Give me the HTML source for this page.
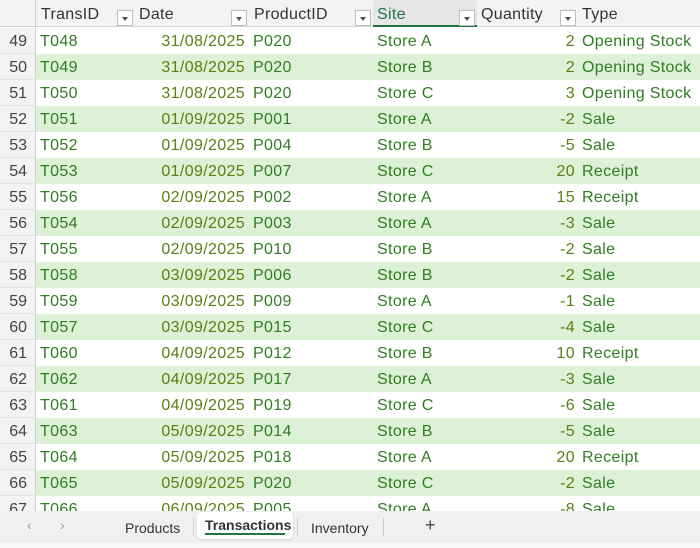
<!DOCTYPE html><html><head><style>
*{margin:0;padding:0;box-sizing:border-box}
body{width:700px;height:548px;overflow:hidden;background:#fff;font-family:"Liberation Sans",sans-serif;position:relative}
.hdr{position:absolute;top:0;left:0;width:700px;height:27px;background:#f3f3f3;border-bottom:1px solid #d6d6d6}
.h{position:absolute;top:6px;font-size:16px;color:#333;letter-spacing:0.3px}
.fb{position:absolute;top:10px;width:16px;height:16px;border:1px solid #bdbdbd;background:#fff}
.fb:after{content:"";position:absolute;left:4px;top:6px;border-left:3px solid transparent;border-right:3px solid transparent;border-top:4px solid #555}
.row{position:absolute;left:0;width:700px;height:26px;font-size:16px;color:#2f7d22;letter-spacing:0.35px}
.row.g .bg{background:#dcf1d5}
.bg{position:absolute;left:36px;right:0;top:0;bottom:0}
.rn{position:absolute;left:0;width:36px;top:0;height:26px;background:#f3f3f3;border-right:1px solid #d0d0d0;border-bottom:1px solid #e2e2e2;color:#444;text-align:right;padding-right:8px;line-height:28px;letter-spacing:0}
.c{position:absolute;top:1px;line-height:26px;white-space:nowrap}
.d{color:#5a7f12}
.tabs{position:absolute;top:511px;left:0;width:700px;height:32px;background:#f0f0f0;font-size:14px;color:#333}
.strip{position:absolute;top:543px;left:0;width:700px;height:5px;background:#f8f8f8}
</style></head><body>
<div class="hdr">
<div style="position:absolute;left:0;top:0;width:36px;height:27px;border-right:1px solid #d0d0d0"></div>
<div class="h" style="left:41px">TransID</div><div class="fb" style="left:117px"></div>
<div class="h" style="left:139px">Date</div><div class="fb" style="left:231px"></div>
<div class="h" style="left:254px">ProductID</div><div class="fb" style="left:355px"></div>
<div style="position:absolute;left:373px;top:0;width:104px;height:27px;background:#e6e6e6;border-bottom:2px solid #217346"></div>
<div class="h" style="left:377px;color:#217346">Site</div><div class="fb" style="left:459px"></div>
<div class="h" style="left:481px">Quantity</div><div class="fb" style="left:560px"></div>
<div class="h" style="left:582px">Type</div>
</div>
<div id="rows"></div>
<div class="tabs">
<div style="position:absolute;left:27px;top:6px;color:#999">&#8249;</div>
<div style="position:absolute;left:60px;top:6px;color:#999">&#8250;</div>
<div style="position:absolute;left:125px;top:9px">Products</div>
<div style="position:absolute;left:193px;top:7px;width:1px;height:18px;background:#ccc"></div>
<div style="position:absolute;left:197px;top:1px;width:96px;height:27px;background:#fff;border-radius:4px;box-shadow:0 1px 2px rgba(0,0,0,.15)"></div>
<div style="position:absolute;left:205px;top:6px;font-weight:bold">Transactions</div>
<div style="position:absolute;left:205px;top:22px;width:80px;height:2px;background:#217346"></div>
<div style="position:absolute;left:297px;top:7px;width:1px;height:18px;background:#ccc"></div>
<div style="position:absolute;left:311px;top:9px">Inventory</div>
<div style="position:absolute;left:383px;top:7px;width:1px;height:18px;background:#ccc"></div>
<div style="position:absolute;left:425px;top:4px;font-size:18px;color:#444">+</div>
</div>
<div class="strip"></div>
<script>
var d=[["T048","31/08/2025","P020","Store A","2","Opening Stock"],["T049","31/08/2025","P020","Store B","2","Opening Stock"],["T050","31/08/2025","P020","Store C","3","Opening Stock"],["T051","01/09/2025","P001","Store A","-2","Sale"],["T052","01/09/2025","P004","Store B","-5","Sale"],["T053","01/09/2025","P007","Store C","20","Receipt"],["T056","02/09/2025","P002","Store A","15","Receipt"],["T054","02/09/2025","P003","Store A","-3","Sale"],["T055","02/09/2025","P010","Store B","-2","Sale"],["T058","03/09/2025","P006","Store B","-2","Sale"],["T059","03/09/2025","P009","Store A","-1","Sale"],["T057","03/09/2025","P015","Store C","-4","Sale"],["T060","04/09/2025","P012","Store B","10","Receipt"],["T062","04/09/2025","P017","Store A","-3","Sale"],["T061","04/09/2025","P019","Store C","-6","Sale"],["T063","05/09/2025","P014","Store B","-5","Sale"],["T064","05/09/2025","P018","Store A","20","Receipt"],["T065","05/09/2025","P020","Store C","-2","Sale"],["T066","06/09/2025","P005","Store A","-8","Sale"]];
var h="";d.forEach(function(r,i){h+='<div class="row'+(i%2?' g':'')+'" style="top:'+(28+26*i)+'px"><div class="bg"></div><div class="rn">'+(49+i)+'</div><div class="c" style="left:40px">'+r[0]+'</div><div class="c d" style="right:455px">'+r[1]+'</div><div class="c" style="left:253px">'+r[2]+'</div><div class="c" style="left:377px">'+r[3]+'</div><div class="c d" style="right:125px">'+r[4]+'</div><div class="c" style="left:582px">'+r[5]+'</div></div>';});
document.getElementById("rows").innerHTML=h;
</script>
</body></html>
